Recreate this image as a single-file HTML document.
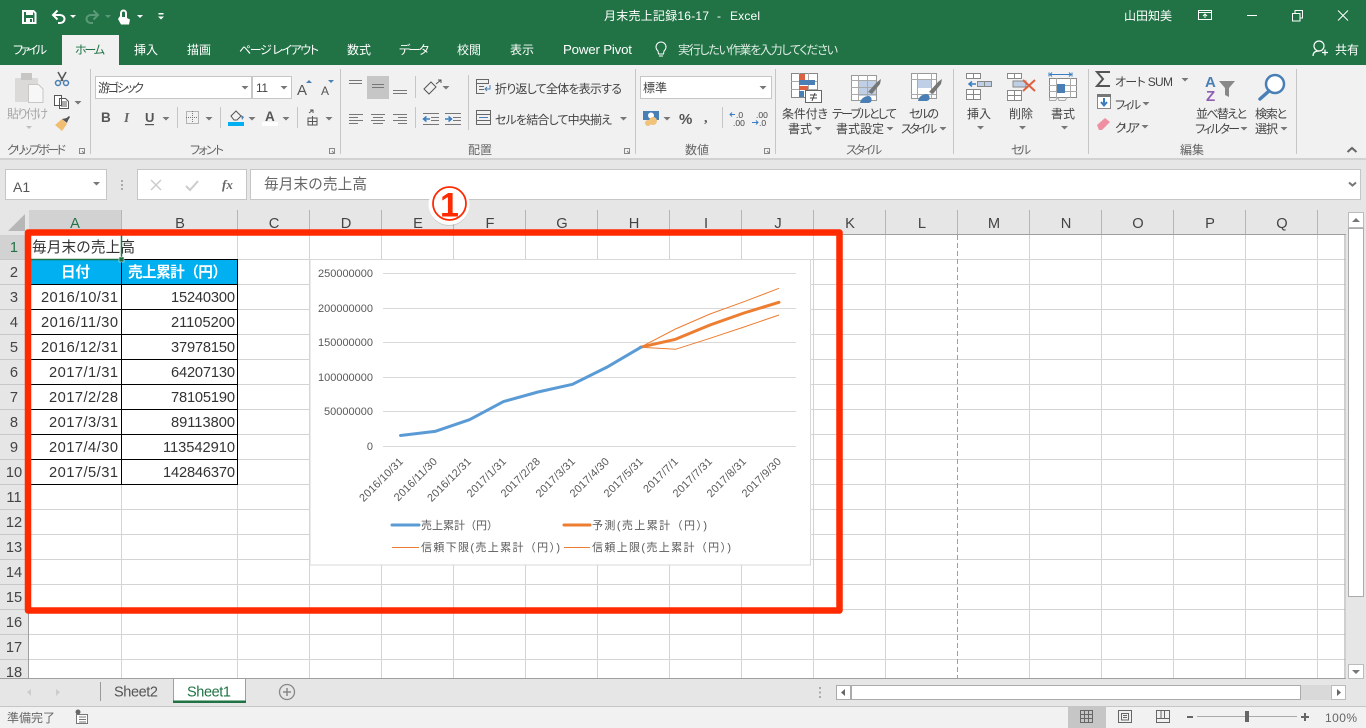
<!DOCTYPE html>
<html lang="ja"><head><meta charset="utf-8"><title>月末売上記録16-17 - Excel</title>
<style>
html,body{margin:0;padding:0;width:1366px;height:728px;overflow:hidden;background:#fff}
svg{display:block;font-family:"Liberation Sans","Noto Sans CJK JP",sans-serif;font-size:12px;font-feature-settings:"palt"}
.r{fill:#444}.g{fill:#666;font-size:12px}.w{fill:#fff}.c{font-size:14.67px;fill:#333;font-feature-settings:normal}.h{font-size:14.67px;fill:#444;text-anchor:middle}
.a{font-size:11px;fill:#595959;font-feature-settings:normal}.x{font-size:11px;letter-spacing:.2px;fill:#595959;text-anchor:end}.s{fill:none;stroke:#666;stroke-width:1}.b{fill:none;stroke:#4a7fb5;stroke-width:1.3}
.n{font-feature-settings:normal}
</style></head><body>
<svg width="1366" height="728" viewBox="0 0 1366 728" xmlns="http://www.w3.org/2000/svg">
<defs>
<path id="d" d="M-3.5 0h7l-3.5 3.5z" fill="#777"/>
<path id="dw" d="M-3 0h6l-3 3z" fill="#fff"/>
<path id="l" d="M0 0h5v5h-5zM2.5 2.5l2.5 2.5" fill="none" stroke="#888"/>
</defs>
<!-- backgrounds -->
<rect width="1366" height="65" fill="#217346"/>
<rect y="65" width="1366" height="93" fill="#f1f1f1"/>
<rect y="158" width="1366" height="2" fill="#d2d2d2"/>
<rect y="160" width="1366" height="75" fill="#e6e6e6"/>
<rect x="62" y="35" width="57" height="30" fill="#f1f1f1"/>
<!-- title bar -->
<path d="M23 11h10.500l2 2v10h-12.500z" fill="none" stroke="#fff" stroke-width="2"/><rect x="26" y="11" width="7" height="4" fill="#fff"/><rect x="26" y="18" width="7" height="5" fill="#fff"/><rect x="30" y="19" width="2" height="3" fill="#217346"/>
<path d="M54 15h6a4.500 4 0 0 1 0 8h-2" fill="none" stroke="#fff" stroke-width="2"/><path d="M57.500 10.500l-4.500 4.500 4.500 4.500" fill="none" stroke="#fff" stroke-width="2"/><use href="#dw" x="73" y="15"/>
<path d="M97 15h-6a4.500 4 0 0 0 0 8h2" fill="none" stroke="#5b9a78" stroke-width="2"/><path d="M93.500 10.500l4.500 4.500-4.500 4.500" fill="none" stroke="#5b9a78" stroke-width="2"/><path d="M105 15h6l-3 3z" fill="#5b9a78"/>
<path d="M121 19v-6a2.500 2.500 0 0 1 5 0v5" fill="none" stroke="#fff" stroke-width="2"/><path d="M120 16l-2 3 3 5.500h8l1-5-5-2.500h-3z" fill="#fff"/><use href="#dw" x="140" y="15"/>
<rect x="158.500" y="13" width="5" height="1.500" fill="#fff"/><use href="#dw" x="161" y="16.500"/>
<text x="604" y="20" class="w" textLength="105">月末売上記録16-17</text><text x="717" y="20" class="w">-</text><text x="730" y="20" class="w" textLength="30">Excel</text>
<text x="1124" y="20" class="w" textLength="48">山田知美</text>
<path d="M1198.500 10.500h13v9h-13zM1198.500 12.500h13M1205 18v-4M1203 16l2-2 2 2" fill="none" stroke="#fff"/>
<rect x="1247" y="15" width="10" height="1" fill="#fff"/>
<path d="M1292.500 13.500h7.500v7.500h-7.500zM1295 13v-2.500h7.500v7.500h-2.500" fill="none" stroke="#fff"/>
<path d="M1338 10.500l10 10M1348 10.500l-10 10" fill="none" stroke="#fff"/>
<!-- tabs -->
<g class="w" fill="#fff">
<text x="13" y="54" textLength="34">ファイル</text>
<text x="134" y="54">挿入</text><text x="187" y="54">描画</text>
<text x="239" y="54" textLength="80">ページ レイアウト</text>
<text x="347" y="54">数式</text><text x="399" y="54" textLength="30">データ</text>
<text x="457" y="54">校閲</text><text x="510" y="54">表示</text>
<text x="563" y="54" textLength="69" font-size="13.300">Power Pivot</text>
<text x="678" y="54" textLength="160" fill="#e0ece5">実行したい作業を入力してください</text>
<text x="1335" y="54">共有</text>
</g>
<text x="75" y="54" textLength="30" fill="#217346">ホーム</text>
<path d="M658 51a5 5 0 1 1 6 0l-.5 3h-5zM659 56h4" fill="none" stroke="#fff"/>
<circle cx="1319" cy="46" r="5" fill="none" stroke="#fff" stroke-width="1.200"/><path d="M1313 56c0-4 3-5 6-5M1322 52.500h6M1325 49.500v6" fill="none" stroke="#fff" stroke-width="1.200"/>
<!-- ribbon separators -->
<path d="M90.500 69v85M340.500 69v85M635.500 69v85M775.500 69v85M953.500 69v85M1088.500 69v85M1296.500 69v85" stroke="#c6c6c6"/>
<path d="M177.500 107v21M220.500 107v21M297.500 107v21M415.500 76v22M415.500 107v21M468.500 75v55M722.500 107v21" stroke="#c6c6c6"/>
<!-- clipboard -->
<rect x="15" y="78" width="23" height="24" rx="1" fill="#dcd9d9"/><rect x="21" y="73" width="11" height="7" fill="#c8c5c5"/><path d="M28.500 84.500h10l4.500 4.500v13.500h-14.500z" fill="#f7f7f7" stroke="#c9c6c6"/>
<text x="7" y="118" textLength="41" fill="#a6a6a6">貼り付け</text><path d="M26 126h6l-3 3z" fill="#c0c0c0"/>
<path d="M58 72l5 9M66 72l-5 9" stroke="#555" stroke-width="1.500" fill="none"/><circle cx="58" cy="83" r="2.500" fill="none" stroke="#4a7fb5" stroke-width="1.500"/><circle cx="66" cy="83" r="2.500" fill="none" stroke="#4a7fb5" stroke-width="1.500"/>
<path d="M54.500 95.500h7v10h-7zM59.500 98.500h6l3 3v7h-9zM61 102h6M61 104h6M61 106h6" fill="#fff" stroke="#555"/><use href="#d" x="78" y="101"/>
<path d="M55 125l7-6 5 5-5 7z" fill="#f0bd72"/><path d="M62 119l5-1 2-1-2 6z" fill="#555"/><path d="M64 120l5-4 1 1-3 5z" fill="#555"/>
<text x="7" y="154" textLength="59" class="g">クリップボード</text>
<!-- launchers -->
<use href="#l" x="79.500" y="148.500"/><use href="#l" x="329.500" y="148.500"/><use href="#l" x="624.500" y="148.500"/><use href="#l" x="764.500" y="148.500"/>
<!-- font group -->
<rect x="95.500" y="76.500" width="156" height="22" fill="#fff" stroke="#c6c6c6"/><rect x="252.500" y="76.500" width="39" height="22" fill="#fff" stroke="#c6c6c6"/>
<text x="98" y="92" textLength="46" fill="#444">游ゴシック</text><text x="256" y="92" textLength="12" fill="#444">11</text>
<use href="#d" x="245" y="86"/><use href="#d" x="284" y="86"/>
<text x="297" y="95" font-size="15" fill="#555">A</text><path d="M306 83h6l-3-3z" fill="#4a7fb5"/>
<text x="321" y="95" font-size="12" fill="#555">A</text><path d="M328 80h6l-3 3z" fill="#4a7fb5"/>
<text x="101" y="122" font-weight="bold" font-size="13.500" fill="#555">B</text><text x="124" y="122" font-style="italic" font-weight="bold" font-size="13.500" fill="#666" font-family="Liberation Serif">I</text><text x="145" y="122" font-weight="bold" font-size="13" fill="#555">U</text><rect x="145" y="124" width="9" height="1.200" fill="#555"/><use href="#d" x="166" y="117"/>
<rect x="186.500" y="111.500" width="12" height="12" fill="none" stroke="#777" stroke-dasharray="1 1"/><path d="M192.500 111v12M186 117.500h12" stroke="#777" stroke-dasharray="1 1"/><use href="#d" x="209" y="117"/>
<path d="M231 116l5-5 5 5-4 4h-3z" fill="none" stroke="#555"/><path d="M241 115l3 2-2 3z" fill="#4a7fb5"/><rect x="228" y="122" width="16" height="4" fill="#00b0f0"/><use href="#d" x="252" y="117"/>
<text x="265" y="121" font-weight="bold" font-size="13.500" fill="#555">A</text><rect x="262" y="122" width="16" height="4" fill="#fff"/><use href="#d" x="286" y="117"/>
<path d="M309 113l4-3M310 110h3v3M308 118h9v7h-9zM312.500 116v9M308 121.500h9" fill="none" stroke="#555"/><use href="#d" x="329" y="117"/>
<text x="190" y="154" textLength="34" class="g">フォント</text>
<!-- alignment -->
<rect x="367" y="76" width="22" height="23" fill="#c6c6c6"/>
<path d="M349 80.500h13M349 83.500h13M372 84.500h12M372 87.500h12M393 90.500h14M393 93.500h14" stroke="#777"/>
<path d="M349 114.500h14M349 117.500h9M349 120.500h14M349 123.500h9M371 114.500h14M373 117.500h10M371 120.500h14M373 123.500h10M393 114.500h14M398 117.500h9M393 120.500h14M398 123.500h9" stroke="#777"/>
<path d="M424 89l7-7 5 5-7 7zM436 84l5-4M438 80h3v3" fill="none" stroke="#555"/><use href="#d" x="446" y="86"/>
<path d="M423 113.500h16M431 117.500h8M431 120.500h8M423 124.500h16" stroke="#777"/><path d="M430 119h-6M426.500 116.500l-3 2.500 3 2.500" fill="none" stroke="#3b7dc0" stroke-width="1.500"/>
<path d="M445 113.500h16M453 117.500h8M453 120.500h8M445 124.500h16" stroke="#777"/><path d="M445 119h6M448.500 116.500l3 2.500-3 2.500" fill="none" stroke="#3b7dc0" stroke-width="1.500"/>
<path d="M476.500 79.500h12v4h-12zM476.500 83.500v10h8M479 86.500h5M479 89.500h5" fill="none" stroke="#666"/><path d="M490 85v4h-5M487 87l-2 2 2 2" fill="none" stroke="#4a7fb5"/>
<text x="495" y="93" textLength="127" fill="#444">折り返して全体を表示する</text>
<path d="M476.500 110.500h14v14h-14zM476.500 114.500h14M476.500 120.500h14" fill="none" stroke="#666"/><path d="M479 117.500h9" stroke="#4a7fb5"/>
<text x="495" y="124" textLength="117" fill="#444">セルを結合して中央揃え</text><use href="#d" x="623.500" y="117"/>
<text x="468" y="154" class="g">配置</text>
<!-- number -->
<rect x="640.500" y="76.500" width="131" height="22" fill="#fff" stroke="#c6c6c6"/><text x="643" y="92" fill="#444">標準</text><use href="#d" x="763" y="86"/>
<rect x="643" y="111" width="16" height="9" fill="#4a7fb5"/><circle cx="651" cy="115.500" r="3" fill="#fff"/><circle cx="653" cy="121" r="4" fill="#f0c27a"/><circle cx="648" cy="123" r="3" fill="#f0c27a"/><use href="#d" x="667" y="117"/>
<text x="679" y="124" font-size="15" font-weight="bold" fill="#555" textLength="13">%</text><text x="704" y="122" font-size="14" font-weight="bold" fill="#555" font-family="Liberation Serif">,</text>
<text x="736" y="118" font-size="8.500" fill="#444">.0</text><text x="733" y="126" font-size="8.500" fill="#444">.00</text><path d="M735 114.500h-5M732 112.500l-2 2 2 2" fill="none" stroke="#3b7dc0"/>
<text x="756" y="118" font-size="8.500" fill="#444">.00</text><text x="759" y="126" font-size="8.500" fill="#444">.0</text><path d="M752 122.500h6M756 120.500l2 2-2 2" fill="none" stroke="#3b7dc0"/>
<text x="685" y="154" class="g">数値</text>
<!-- styles -->
<rect x="791.500" y="73.500" width="26" height="24" fill="#fff" stroke="#888"/><path d="M791 81.500h26M791 89.500h26M799.500 73v24M808.500 73v24" stroke="#aaa"/>
<rect x="799" y="74" width="6" height="6" fill="#dc6141"/><rect x="799" y="80" width="16" height="5" fill="#4a7fb5"/><rect x="799" y="86" width="9" height="4" fill="#dc6141"/><rect x="799" y="91" width="5" height="6" fill="#4a7fb5"/>
<rect x="805.500" y="90.500" width="16" height="12" fill="#fff" stroke="#666"/><path d="M810 95h7M810 98h7M815 93l-3 8" stroke="#444" fill="none"/>
<text x="782" y="118" textLength="46" fill="#444">条件付き</text><text x="788" y="133" textLength="24" fill="#444">書式</text><use href="#d" x="818" y="127"/>
<rect x="851.500" y="75.500" width="25" height="25" fill="#fff" stroke="#999"/><rect x="858" y="80" width="18" height="16" fill="#bfd0e6"/><path d="M851 80.500h25M851 87.500h25M851 94.500h25M858.500 75v25M867.500 75v25" stroke="#aaa"/>
<path d="M868 92l9-10 4-3-1 5-8 10z" fill="#777"/><path d="M860 103c1-5 5-7 9-7 3 1 3 4 2 6l-2 1z" fill="#4a7fb5"/>
<text x="832" y="118" textLength="65" fill="#444">テーブルとして</text><text x="836" y="133" textLength="48" fill="#444">書式設定</text><use href="#d" x="890" y="127"/>
<rect x="911.500" y="73.500" width="25" height="25" fill="#fff" stroke="#999"/><rect x="917" y="79" width="14" height="9" fill="#bfd0e6"/><path d="M911 79.500h25M911 94.500h25M917.500 73v25M931.500 73v25" stroke="#aaa"/>
<path d="M929 92l9-10 4-3-1 5-8 10z" fill="#777"/><path d="M918 101c1-5 5-7 9-7 3 1 3 4 2 6l-2 1z" fill="#4a7fb5"/>
<text x="909" y="118" textLength="30" fill="#444">セルの</text><text x="901" y="133" textLength="36" fill="#444">スタイル</text><use href="#d" x="943" y="127"/>
<text x="846" y="154" textLength="36" class="g">スタイル</text>
<!-- cells -->
<path d="M966.500 73.500h14v5h-14zM973.500 73v5M966.500 89.500h14v10h-14zM966.500 94.500h14M973.500 89v10" fill="#fff" stroke="#888"/><path d="M977.500 81.500h14v5h-14zM984.500 81v5" fill="#bfd0e6" stroke="#888"/><path d="M976 84h-7M972 81.500l-3 2.500 3 2.500" fill="none" stroke="#3b7dc0" stroke-width="1.500"/>
<text x="967" y="118" fill="#444">挿入</text><use href="#d" x="980.500" y="126"/>
<path d="M1007.500 73.500h14v5h-14zM1014.500 73v5M1007.500 90.500h14v10h-14zM1007.500 95.500h14M1014.500 90v10" fill="#fff" stroke="#888"/><rect x="1013" y="81" width="13" height="6" fill="#bfd0e6" stroke="#888"/>
<path d="M1023 80l12 11M1035 80l-12 11" stroke="#dc6141" stroke-width="2" fill="none"/>
<text x="1009" y="118" fill="#444">削除</text><use href="#d" x="1022.500" y="126"/>
<path d="M1049 72.500v4M1072 72.500v4M1050 74.500h21M1052 72.500l-2 2 2 2M1069 72.500l2 2-2 2" fill="none" stroke="#3b7dc0"/>
<rect x="1049.500" y="78.500" width="27" height="19" fill="#fff" stroke="#888"/><path d="M1056.500 78v20M1070.500 78v20M1049 85.500h28M1049 91.500h28" stroke="#aaa"/><rect x="1057" y="84" width="8" height="9" fill="#4a7fb5"/><path d="M1049.500 97.500v3h6l2-3M1058 97.500l1 3h6l2-3" fill="none" stroke="#aaa"/>
<text x="1051" y="118" fill="#444">書式</text><use href="#d" x="1064.500" y="126"/>
<text x="1011" y="154" textLength="20" class="g">セル</text>
<!-- editing -->
<path d="M1110 72h-13l6 7-6 7h13" fill="none" stroke="#555" stroke-width="2"/>
<text x="1115" y="86" textLength="58" fill="#444">オート SUM</text><use href="#d" x="1185" y="78"/>
<rect x="1097.500" y="95.500" width="13" height="13" fill="#fff" stroke="#888"/><rect x="1097" y="94" width="14" height="3" fill="#777"/><path d="M1104 98v7M1101 102l3 3.500 3-3.500" fill="none" stroke="#3b7dc0" stroke-width="2"/>
<text x="1115" y="109" textLength="26" fill="#444">フィル</text><use href="#d" x="1146" y="102"/>
<path d="M1097 125l8-7 5 4-8 8h-3z" fill="#ee8fa2"/>
<text x="1115" y="132" textLength="25" fill="#444">クリア</text><use href="#d" x="1145" y="125"/>
<text x="1205" y="87" font-size="15" font-weight="bold" fill="#4a7fb5">A</text><text x="1206" y="101" font-size="15" font-weight="bold" fill="#8e5fb0">Z</text><path d="M1219 81h16l-6 7v9l-4-2v-7z" fill="#888"/>
<circle cx="1275" cy="84" r="9" fill="#fff" stroke="#4a7fb5" stroke-width="2.500"/><path d="M1269 91l-9 8" stroke="#4a7fb5" stroke-width="3.500" stroke-linecap="round"/>
<text x="1196" y="118" textLength="51" fill="#444">並べ替えと</text><text x="1195" y="133" textLength="45" fill="#444">フィルター</text><use href="#d" x="1244" y="127"/>
<text x="1255" y="118" textLength="32" fill="#444">検索と</text><text x="1255" y="133" textLength="23" fill="#444">選択</text><use href="#d" x="1284" y="127"/>
<text x="1180" y="154" class="g">編集</text>
<path d="M1347.500 152l4.500-4 4.500 4" fill="none" stroke="#666" stroke-width="2"/>
<!-- formula bar -->
<rect x="5.500" y="169.500" width="101" height="30" fill="#fff" stroke="#c6c6c6"/><text x="13" y="192" font-size="14" fill="#555">A1</text><use href="#d" x="96.500" y="182"/>
<path d="M122 180v2M122 184v2M122 188v2" stroke="#aaa" stroke-width="2"/>
<rect x="137.500" y="169.500" width="109" height="30" fill="#fff" stroke="#c6c6c6"/><path d="M151 180l10 10M161 180l-10 10" stroke="#ccc" stroke-width="1.500"/><path d="M186 186l4 4 8-9" fill="none" stroke="#ccc" stroke-width="2"/>
<text x="222" y="189" font-family="Liberation Serif" font-style="italic" font-weight="bold" font-size="13" fill="#666">fx</text>
<rect x="250.500" y="169.500" width="1110" height="30" fill="#fff" stroke="#c6c6c6"/>
<text x="264" y="189" font-size="14.670" fill="#666" textLength="103" class="n">毎月末の売上高</text>
<path d="M1349 182.500l3.500 3 3.500-3" fill="none" stroke="#777" stroke-width="2"/>
<!-- sheet -->
<rect x="29" y="235" width="1316" height="443" fill="#fff"/>
<rect x="0" y="235" width="28" height="443" fill="#e6e6e6"/>
<rect x="29" y="210" width="92" height="24" fill="#d2d2d2"/>
<rect x="0" y="235" width="28" height="24" fill="#d2d2d2"/>
<path d="M8 231l17-17v17z" fill="#b7b7b7"/>
<path d="M121.500 210v24M237.500 210v24M309.500 210v24M381.500 210v24M453.500 210v24M525.500 210v24M597.500 210v24M669.500 210v24M741.500 210v24M813.500 210v24M885.500 210v24M957.500 210v24M1029.500 210v24M1101.500 210v24M1173.500 210v24M1245.500 210v24M1317.500 210v24" stroke="#b5b5b5"/>
<path d="M0 259.500h28M0 284.500h28M0 309.500h28M0 334.500h28M0 359.500h28M0 384.500h28M0 409.500h28M0 434.500h28M0 459.500h28M0 484.500h28M0 509.500h28M0 534.500h28M0 559.500h28M0 584.500h28M0 609.500h28M0 634.500h28M0 659.500h28" stroke="#c8c8c8"/>
<path d="M29 259.500h1316M29 284.500h1316M29 309.500h1316M29 334.500h1316M29 359.500h1316M29 384.500h1316M29 409.500h1316M29 434.500h1316M29 459.500h1316M29 484.500h1316M29 509.500h1316M29 534.500h1316M29 559.500h1316M29 584.500h1316M29 609.500h1316M29 634.500h1316M29 659.500h1316" stroke="#d4d4d4"/>
<path d="M121.500 235v443M237.500 235v443M309.500 235v443M381.500 235v443M453.500 235v443M525.500 235v443M597.500 235v443M669.500 235v443M741.500 235v443M813.500 235v443M885.500 235v443M1029.500 235v443M1101.500 235v443M1173.500 235v443M1245.500 235v443M1317.500 235v443" stroke="#d4d4d4"/>
<path d="M957.500 235v443" stroke="#a0a0a0" stroke-dasharray="5 3"/>
<path d="M28.500 234v444M28 234.500h1318M1345 234v445" stroke="#9f9f9f" fill="none"/>
<!-- headers -->
<g class="h">
<text x="75" y="228" style="fill:#217346">A</text><text x="180" y="228">B</text><text x="274" y="228">C</text><text x="346" y="228">D</text><text x="418" y="228">E</text><text x="490" y="228">F</text><text x="562" y="228">G</text><text x="634" y="228">H</text><text x="706" y="228">I</text><text x="778" y="228">J</text><text x="850" y="228">K</text><text x="922" y="228">L</text><text x="994" y="228">M</text><text x="1066" y="228">N</text><text x="1138" y="228">O</text><text x="1210" y="228">P</text><text x="1282" y="228">Q</text>
<text x="14" y="252" style="fill:#217346">1</text><text x="14" y="277">2</text><text x="14" y="302">3</text><text x="14" y="327">4</text><text x="14" y="352">5</text><text x="14" y="377">6</text><text x="14" y="402">7</text><text x="14" y="427">8</text><text x="14" y="452">9</text><text x="14" y="477">10</text><text x="14" y="502">11</text><text x="14" y="527">12</text><text x="14" y="552">13</text><text x="14" y="577">14</text><text x="14" y="602">15</text><text x="14" y="627">16</text><text x="14" y="652">17</text><text x="14" y="677">18</text>
</g>
<!-- table -->
<rect x="30" y="260" width="207" height="24" fill="#00b0f0"/>
<path d="M29 284.500h209M29 309.500h209M29 334.500h209M29 359.500h209M29 384.500h209M29 409.500h209M29 434.500h209M29 459.500h209M29 484.500h209M122 259.500h116M121.500 259v226M237.500 259v226M29.500 259v226" stroke="#000" fill="none"/>
<text x="32" y="252" class="c" textLength="103">毎月末の売上高</text>
<text x="61" y="277" font-size="14.670" font-weight="bold" fill="#fff" textLength="29" class="n">日付</text>
<text x="128" y="277" font-size="14.670" font-weight="bold" fill="#fff" textLength="99" class="n">売上累計（円）</text>
<g class="c" text-anchor="end">
<text x="118" y="302" textLength="77">2016/10/31</text><text x="118" y="327" textLength="77">2016/11/30</text><text x="118" y="352" textLength="77">2016/12/31</text><text x="118" y="377" textLength="69">2017/1/31</text><text x="118" y="402" textLength="69">2017/2/28</text><text x="118" y="427" textLength="69">2017/3/31</text><text x="118" y="452" textLength="69">2017/4/30</text><text x="118" y="477" textLength="69">2017/5/31</text>
<text x="235" y="302" textLength="64">15240300</text><text x="235" y="327" textLength="64">21105200</text><text x="235" y="352" textLength="64">37978150</text><text x="235" y="377" textLength="64">64207130</text><text x="235" y="402" textLength="64">78105190</text><text x="235" y="427" textLength="64">89113800</text><text x="235" y="452" textLength="72">113542910</text><text x="235" y="477" textLength="72">142846370</text>
</g>
<!-- selection -->
<path d="M31 259.500h90M121.500 235v24" stroke="#217346" stroke-width="1.500" fill="none"/><rect x="119" y="257" width="5" height="5" fill="#217346" stroke="#fff" stroke-width=".5"/>
<!-- chart -->
<rect x="310" y="259.500" width="500.500" height="305.500" fill="#fff" stroke="#d9d9d9"/>
<path d="M383 273.500h413M383 308.500h413M383 342.500h413M383 377.500h413M383 411.500h413M383 446.500h413" stroke="#d9d9d9"/>
<g class="a" text-anchor="end">
<text x="373" y="277" textLength="55">250000000</text><text x="373" y="312" textLength="55">200000000</text><text x="373" y="346" textLength="55">150000000</text><text x="373" y="381" textLength="55">100000000</text><text x="373" y="415" textLength="49">50000000</text><text x="373" y="450">0</text>
</g>
<g>
<text class="x" transform="translate(404 462) rotate(-45)">2016/10/31</text>
<text class="x" transform="translate(438 462) rotate(-45)">2016/11/30</text>
<text class="x" transform="translate(472 462) rotate(-45)">2016/12/31</text>
<text class="x" transform="translate(507 462) rotate(-45)">2017/1/31</text>
<text class="x" transform="translate(541 462) rotate(-45)">2017/2/28</text>
<text class="x" transform="translate(576 462) rotate(-45)">2017/3/31</text>
<text class="x" transform="translate(610 462) rotate(-45)">2017/4/30</text>
<text class="x" transform="translate(644 462) rotate(-45)">2017/5/31</text>
<text class="x" transform="translate(679 462) rotate(-45)">2017/7/1</text>
<text class="x" transform="translate(713 462) rotate(-45)">2017/7/31</text>
<text class="x" transform="translate(747 462) rotate(-45)">2017/8/31</text>
<text class="x" transform="translate(782 462) rotate(-45)">2017/9/30</text>
</g>
<polyline points="640.500,347.200 675.500,329 710,314 744,301.700 779,288.300" fill="none" stroke="#ed7d31" stroke-width="1"/>
<polyline points="640.500,347.200 675.500,349.300 710,338.300 744,327 779,315" fill="none" stroke="#ed7d31" stroke-width="1"/>
<polyline points="640.500,347.200 675.500,339.300 710,325 744,313 779,302.300" fill="none" stroke="#ed7d31" stroke-width="3" stroke-linecap="round" stroke-linejoin="round"/>
<polyline points="400.500,435.500 435,431.400 469.500,419.700 503.500,401.600 538,392 572.500,384.300 606.500,367.400 641,347.200" fill="none" stroke="#5b9bd5" stroke-width="3" stroke-linecap="round" stroke-linejoin="round"/>
<path d="M392 525h27" stroke="#5b9bd5" stroke-width="3" stroke-linecap="round"/><path d="M564 525h26" stroke="#ed7d31" stroke-width="3" stroke-linecap="round"/>
<path d="M392 547.500h27M564 547.500h26" stroke="#ed7d31"/>
<g class="a">
<text x="421" y="529" textLength="77">売上累計（円）</text><text x="592" y="529" textLength="115">予測(売上累計（円）)</text>
<text x="421" y="551" textLength="139">信頼下限(売上累計（円）)</text><text x="592" y="551" textLength="139">信頼上限(売上累計（円）)</text>
</g>
<!-- red frame -->
<rect x="28" y="232.500" width="811.500" height="378" fill="none" stroke="#ff2a00" stroke-width="6.500" stroke-linejoin="round"/>
<circle cx="449" cy="206" r="20" fill="#000" opacity=".12"/>
<circle cx="449" cy="204.500" r="20.500" fill="#fff"/>
<circle cx="449.500" cy="203.500" r="16.500" fill="#fff" stroke="#ff2a00" stroke-width="1.800"/>
<text x="449.500" y="216.500" text-anchor="middle" font-size="34" font-weight="bold" fill="#ff2a00">1</text>
<!-- vertical scrollbar -->
<rect x="1346" y="210" width="20" height="469" fill="#e6e6e6"/>
<rect x="1348.500" y="212.500" width="15" height="15" fill="#fff" stroke="#bbb"/><path d="M1352 222h8l-4-4z" fill="#777"/>
<rect x="1348.500" y="228.500" width="15" height="368" fill="#fff" stroke="#ababab"/>
<rect x="1348.500" y="664.500" width="15" height="14" fill="#fff" stroke="#bbb"/><path d="M1352 670h8l-4 4z" fill="#777"/>
<!-- tab bar -->
<rect y="679" width="1366" height="27" fill="#e6e6e6"/>
<rect y="678" width="1346" height="1" fill="#9f9f9f"/>
<rect y="706" width="1366" height="1" fill="#c6c6c6"/>
<rect y="707" width="1366" height="21" fill="#f1f1f1"/>
<path d="M27 692l4-3v7zM60 692l-4-3v7z" fill="#ccc"/>
<path d="M100.500 682v19" stroke="#999"/>
<text x="114" y="696.500" font-size="14.500" fill="#555" textLength="44">Sheet2</text>
<rect x="173" y="679" width="73" height="22" fill="#fff"/><path d="M173.500 678v23M245.500 678v23" stroke="#9f9f9f"/><rect x="173" y="700.500" width="73" height="2.500" fill="#217346"/>
<text x="187" y="696.500" font-size="14.500" fill="#217346" textLength="44">Sheet1</text>
<circle cx="287" cy="692" r="7.500" fill="none" stroke="#888" stroke-width="1.300"/><path d="M283 692h8M287 688v8" stroke="#888" stroke-width="1.500"/>
<path d="M820 687v2M820 691.500v2M820 696v2" stroke="#aaa" stroke-width="2"/>
<rect x="836.500" y="685.500" width="14" height="14" fill="#fff" stroke="#ababab"/><path d="M841 692.500l4-3.500v7z" fill="#666"/>
<rect x="851.500" y="685.500" width="449" height="14" fill="#fff" stroke="#ababab"/>
<rect x="1301" y="685" width="30" height="15" fill="#d9d9d9"/>
<rect x="1331.500" y="685.500" width="14" height="14" fill="#fff" stroke="#bbb"/><path d="M1341 692.500l-4-3.500v7z" fill="#666"/>
<!-- status -->
<text x="7" y="722" textLength="48" fill="#666">準備完了</text>
<rect x="76.500" y="714.500" width="11" height="9" fill="#fff" stroke="#777"/><path d="M79 717h7M79 719.500h7M79 722h7" stroke="#777"/><circle cx="78" cy="712" r="2.500" fill="#666"/>
<rect x="1068" y="707" width="38" height="21" fill="#c6c6c6"/>
<path d="M1080.500 710.500h12v12h-12zM1084.500 710v13M1088.500 710v13M1080 714.500h13M1080 718.500h13" fill="none" stroke="#666"/>
<path d="M1118.500 710.500h13v12h-13zM1121.500 713.500h7v6.500h-7zM1123 715.500h4M1123 717.500h4" fill="none" stroke="#666"/>
<path d="M1156.500 710.500h13v12h-13zM1156.500 718.500h8v-8M1164.500 718.500h5M1161 710v8" fill="none" stroke="#666"/>
<rect x="1187" y="716" width="6" height="2" fill="#666"/>
<rect x="1197" y="716" width="100" height="1" fill="#aaa"/>
<rect x="1245" y="711" width="4" height="11" fill="#666"/>
<path d="M1301 717h8M1305 713v8" stroke="#666" stroke-width="2"/>
<text x="1325" y="722" textLength="32" fill="#666">100%</text>
</svg>
</body></html>
